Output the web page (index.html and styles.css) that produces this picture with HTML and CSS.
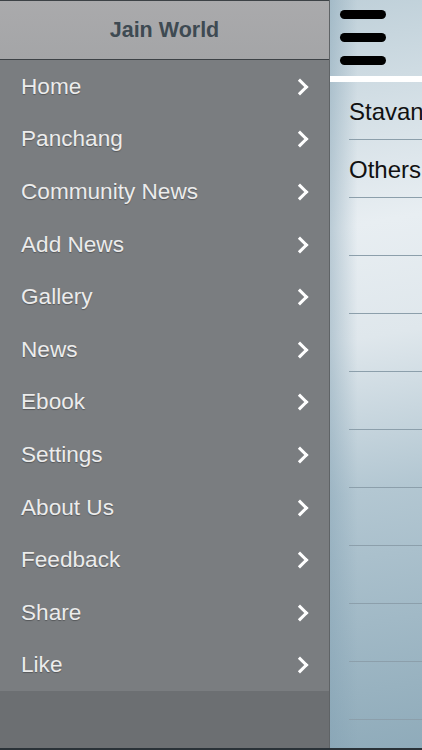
FILE: index.html
```html
<!DOCTYPE html>
<html lang="en">
<head>
	<meta charset="UTF-8">
	<title>Jain World</title>
	<link rel="stylesheet" href="styles.css">
</head>
<body>
	<div class="app">
		<div class="drawer">
			<div class="drawer-head">Jain World</div>
			<ul class="menu">
				<li><span>Home</span><i class="chev"></i></li>
				<li><span>Panchang</span><i class="chev"></i></li>
				<li><span>Community News</span><i class="chev"></i></li>
				<li><span>Add News</span><i class="chev"></i></li>
				<li><span>Gallery</span><i class="chev"></i></li>
				<li><span>News</span><i class="chev"></i></li>
				<li><span>Ebook</span><i class="chev"></i></li>
				<li><span>Settings</span><i class="chev"></i></li>
				<li><span>About Us</span><i class="chev"></i></li>
				<li><span>Feedback</span><i class="chev"></i></li>
				<li><span>Share</span><i class="chev"></i></li>
				<li><span>Like</span><i class="chev"></i></li>
			</ul>
			<div class="drawer-foot"></div>
		</div>

		<div class="main">
			<div class="topbar">
				<div class="burger">
					<div></div>
					<div></div>
					<div></div>
				</div>
			</div>
			<ul class="list">
				<li>Stavan</li>
				<li>Others</li>
				<li></li>
				<li></li>
				<li></li>
				<li></li>
				<li></li>
				<li></li>
				<li></li>
				<li></li>
				<li></li>
			</ul>
		</div>
	</div>
</body>
</html>
```

FILE: styles.css
```css
*{padding: 0;margin: 0;box-sizing: border-box;}
body{
	background: #000;
	font-family: "Liberation Sans", Arial, sans-serif;
}
.app{
	width: 422px;
	height: 750px;
	display: flex;
	overflow: hidden;
	border-bottom: 2px solid #2a3238;
}

/* side menu */
.drawer{
	width: 330px;
	flex-shrink: 0;
	display: flex;
	flex-direction: column;
	border-right: 1px solid #5f6366;
}
.drawer-head{
	height: 60px;
	background: linear-gradient(#aaaaac, #a4a5a7);
	border-top: 1px solid #3d4246;
	border-bottom: 1px solid #3d4246;
	color: #3e4a52;
	font-size: 21.5px;
	font-weight: bold;
	text-align: center;
	line-height: 58px;
}
.menu{
	list-style: none;
	background: #7a7d80;
}
.menu li{
	height: 52.6px;
	display: flex;
	align-items: center;
	justify-content: space-between;
	padding: 1px 21px 0 21px;
	color: #ececec;
	font-size: 22.6px;
	text-shadow: 0 1px 1px rgba(0,0,0,0.3);
}
.chev{
	width: 12px;
	height: 12px;
	border-top: 3.5px solid #fff;
	border-right: 3.5px solid #fff;
	transform: rotate(45deg);
	margin-right: 2px;
}
.drawer-foot{
	flex: 1;
	background: #6c6f72;
}

/* content */
.main{
	flex: 1;
	background:
		linear-gradient(90deg, rgba(130,160,178,0.45), rgba(255,255,255,0) 30%),
		linear-gradient(170deg, #bfd0d9 0%, #e8eef2 30%, #dfe7ec 45%, #b3c7d2 65%, #8fabba 100%);
	overflow: hidden;
}
.topbar{
	height: 82px;
	padding: 10px 0 0 10px;
	border-bottom: 6px solid #fff;
}
.burger div{
	width: 46px;
	height: 9px;
	border-radius: 5px;
	background: #000;
	margin-bottom: 14px;
}
.list{
	list-style: none;
	padding-left: 19px;
}
.list li{
	height: 58px;
	border-bottom: 1.5px solid #8c9fab;
	font-size: 24px;
	color: #111;
	line-height: 60px;
	white-space: nowrap;
}
```
